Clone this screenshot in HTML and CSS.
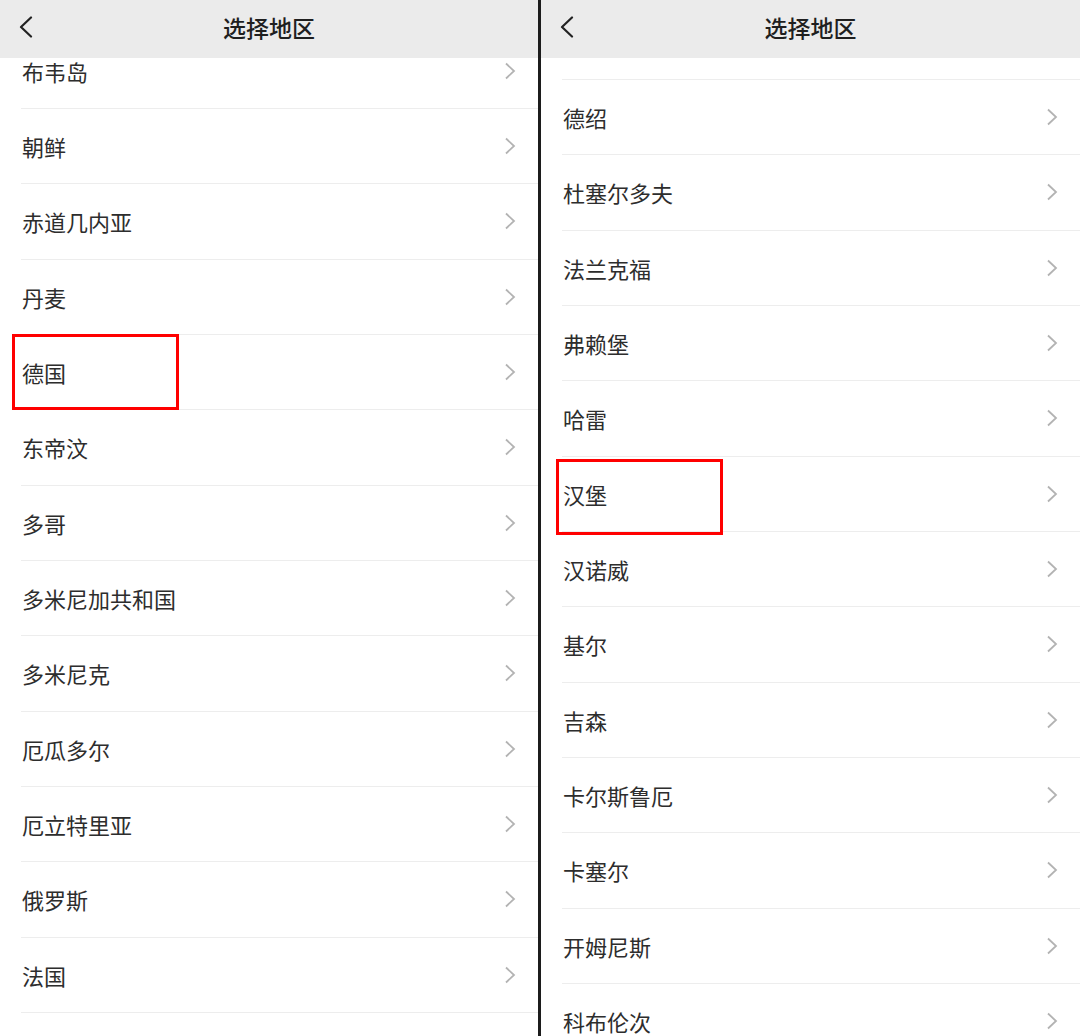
FILE: index.html
```html
<!DOCTYPE html>
<html lang="zh-CN">
<head>
<meta charset="utf-8">
<title>选择地区</title>
<link rel="stylesheet" href="styles.css">
</head>
<body>
<div class="screen">
  <section class="panel panel-left">
    <header class="bar">
      <svg class="back" width="16" height="22" viewBox="0 0 16 22"><path d="M13 1.5 L3 11 L13 20.5" fill="none" stroke="#222" stroke-width="2.2" stroke-linecap="round" stroke-linejoin="round"/></svg>
      <h1 class="title">选择地区</h1>
    </header>
    <div class="list">
      <ul class="rows rows-left">
        <li class="row"><span>布韦岛</span><svg class="chev" width="12" height="18" viewBox="0 0 12 18"><path d="M2 1.5 L10 9 L2 16.5" fill="none" stroke="#b3b3b3" stroke-width="1.8"/></svg></li>
        <li class="row"><span>朝鲜</span><svg class="chev" width="12" height="18" viewBox="0 0 12 18"><path d="M2 1.5 L10 9 L2 16.5" fill="none" stroke="#b3b3b3" stroke-width="1.8"/></svg></li>
        <li class="row"><span>赤道几内亚</span><svg class="chev" width="12" height="18" viewBox="0 0 12 18"><path d="M2 1.5 L10 9 L2 16.5" fill="none" stroke="#b3b3b3" stroke-width="1.8"/></svg></li>
        <li class="row"><span>丹麦</span><svg class="chev" width="12" height="18" viewBox="0 0 12 18"><path d="M2 1.5 L10 9 L2 16.5" fill="none" stroke="#b3b3b3" stroke-width="1.8"/></svg></li>
        <li class="row"><span>德国</span><svg class="chev" width="12" height="18" viewBox="0 0 12 18"><path d="M2 1.5 L10 9 L2 16.5" fill="none" stroke="#b3b3b3" stroke-width="1.8"/></svg><div class="mark mark-left"></div></li>
        <li class="row"><span>东帝汶</span><svg class="chev" width="12" height="18" viewBox="0 0 12 18"><path d="M2 1.5 L10 9 L2 16.5" fill="none" stroke="#b3b3b3" stroke-width="1.8"/></svg></li>
        <li class="row"><span>多哥</span><svg class="chev" width="12" height="18" viewBox="0 0 12 18"><path d="M2 1.5 L10 9 L2 16.5" fill="none" stroke="#b3b3b3" stroke-width="1.8"/></svg></li>
        <li class="row"><span>多米尼加共和国</span><svg class="chev" width="12" height="18" viewBox="0 0 12 18"><path d="M2 1.5 L10 9 L2 16.5" fill="none" stroke="#b3b3b3" stroke-width="1.8"/></svg></li>
        <li class="row"><span>多米尼克</span><svg class="chev" width="12" height="18" viewBox="0 0 12 18"><path d="M2 1.5 L10 9 L2 16.5" fill="none" stroke="#b3b3b3" stroke-width="1.8"/></svg></li>
        <li class="row"><span>厄瓜多尔</span><svg class="chev" width="12" height="18" viewBox="0 0 12 18"><path d="M2 1.5 L10 9 L2 16.5" fill="none" stroke="#b3b3b3" stroke-width="1.8"/></svg></li>
        <li class="row"><span>厄立特里亚</span><svg class="chev" width="12" height="18" viewBox="0 0 12 18"><path d="M2 1.5 L10 9 L2 16.5" fill="none" stroke="#b3b3b3" stroke-width="1.8"/></svg></li>
        <li class="row"><span>俄罗斯</span><svg class="chev" width="12" height="18" viewBox="0 0 12 18"><path d="M2 1.5 L10 9 L2 16.5" fill="none" stroke="#b3b3b3" stroke-width="1.8"/></svg></li>
        <li class="row"><span>法国</span><svg class="chev" width="12" height="18" viewBox="0 0 12 18"><path d="M2 1.5 L10 9 L2 16.5" fill="none" stroke="#b3b3b3" stroke-width="1.8"/></svg></li>
        <li class="row row-empty"></li>
      </ul>
    </div>
  </section>
  <div class="divider"></div>
  <section class="panel panel-right">
    <header class="bar">
      <svg class="back" width="16" height="22" viewBox="0 0 16 22"><path d="M13 1.5 L3 11 L13 20.5" fill="none" stroke="#222" stroke-width="2.2" stroke-linecap="round" stroke-linejoin="round"/></svg>
      <h1 class="title">选择地区</h1>
    </header>
    <div class="list">
      <ul class="rows rows-right">
        <li class="row row-empty"></li>
        <li class="row"><span>德绍</span><svg class="chev" width="12" height="18" viewBox="0 0 12 18"><path d="M2 1.5 L10 9 L2 16.5" fill="none" stroke="#b3b3b3" stroke-width="1.8"/></svg></li>
        <li class="row"><span>杜塞尔多夫</span><svg class="chev" width="12" height="18" viewBox="0 0 12 18"><path d="M2 1.5 L10 9 L2 16.5" fill="none" stroke="#b3b3b3" stroke-width="1.8"/></svg></li>
        <li class="row"><span>法兰克福</span><svg class="chev" width="12" height="18" viewBox="0 0 12 18"><path d="M2 1.5 L10 9 L2 16.5" fill="none" stroke="#b3b3b3" stroke-width="1.8"/></svg></li>
        <li class="row"><span>弗赖堡</span><svg class="chev" width="12" height="18" viewBox="0 0 12 18"><path d="M2 1.5 L10 9 L2 16.5" fill="none" stroke="#b3b3b3" stroke-width="1.8"/></svg></li>
        <li class="row"><span>哈雷</span><svg class="chev" width="12" height="18" viewBox="0 0 12 18"><path d="M2 1.5 L10 9 L2 16.5" fill="none" stroke="#b3b3b3" stroke-width="1.8"/></svg></li>
        <li class="row"><span>汉堡</span><svg class="chev" width="12" height="18" viewBox="0 0 12 18"><path d="M2 1.5 L10 9 L2 16.5" fill="none" stroke="#b3b3b3" stroke-width="1.8"/></svg><div class="mark mark-right"></div></li>
        <li class="row"><span>汉诺威</span><svg class="chev" width="12" height="18" viewBox="0 0 12 18"><path d="M2 1.5 L10 9 L2 16.5" fill="none" stroke="#b3b3b3" stroke-width="1.8"/></svg></li>
        <li class="row"><span>基尔</span><svg class="chev" width="12" height="18" viewBox="0 0 12 18"><path d="M2 1.5 L10 9 L2 16.5" fill="none" stroke="#b3b3b3" stroke-width="1.8"/></svg></li>
        <li class="row"><span>吉森</span><svg class="chev" width="12" height="18" viewBox="0 0 12 18"><path d="M2 1.5 L10 9 L2 16.5" fill="none" stroke="#b3b3b3" stroke-width="1.8"/></svg></li>
        <li class="row"><span>卡尔斯鲁厄</span><svg class="chev" width="12" height="18" viewBox="0 0 12 18"><path d="M2 1.5 L10 9 L2 16.5" fill="none" stroke="#b3b3b3" stroke-width="1.8"/></svg></li>
        <li class="row"><span>卡塞尔</span><svg class="chev" width="12" height="18" viewBox="0 0 12 18"><path d="M2 1.5 L10 9 L2 16.5" fill="none" stroke="#b3b3b3" stroke-width="1.8"/></svg></li>
        <li class="row"><span>开姆尼斯</span><svg class="chev" width="12" height="18" viewBox="0 0 12 18"><path d="M2 1.5 L10 9 L2 16.5" fill="none" stroke="#b3b3b3" stroke-width="1.8"/></svg></li>
        <li class="row"><span>科布伦次</span><svg class="chev" width="12" height="18" viewBox="0 0 12 18"><path d="M2 1.5 L10 9 L2 16.5" fill="none" stroke="#b3b3b3" stroke-width="1.8"/></svg></li>
      </ul>
    </div>
  </section>
</div>
</body>
</html>
```
FILE: styles.css
```css
* { box-sizing: border-box; }
html, body {
  margin: 0;
  padding: 0;
  width: 1080px;
  height: 1036px;
  overflow: hidden;
  background: #ffffff;
  font-family: "Noto Sans CJK SC", "Noto Sans", sans-serif;
}
.screen {
  display: flex;
  width: 1080px;
  height: 1036px;
}
.panel {
  display: flex;
  flex-direction: column;
  height: 1036px;
  background: #ffffff;
  overflow: hidden;
}
.panel-left { width: 538px; }
.panel-right { width: 539px; }
.divider {
  width: 3px;
  height: 1036px;
  background: #1c1c1c;
}
.bar {
  position: relative;
  z-index: 2;
  flex: 0 0 58px;
  height: 58px;
  padding-bottom: 4px;
  background: #ebebeb;
  display: flex;
  align-items: center;
  justify-content: center;
}
.back {
  position: absolute;
  left: 18px;
  top: 16px;
}
.title {
  margin: 0;
  font-size: 23px;
  font-weight: 500;
  color: #1f1f1f;
  line-height: 1;
  letter-spacing: 0;
}
.list {
  flex: 1 1 auto;
  overflow: hidden;
}
.rows {
  list-style: none;
  margin: 0;
  padding: 0;
}
.rows-left { margin-top: -24.33px; }
.rows-right { margin-top: -53.33px; }
.row {
  position: relative;
  height: 75.33px;
  margin-left: 21px;
  padding-left: 1px;
  padding-right: 22px;
  border-bottom: 1px solid #ededed;
  display: flex;
  align-items: center;
  justify-content: space-between;
  font-size: 22px;
  color: #2d2d2d;
  line-height: 1;
}
.chev { flex: 0 0 auto; }
.mark {
  position: absolute;
  width: 167px;
  height: 76px;
  border: 3.5px solid #ff0000;
  pointer-events: none;
}
.mark-left { left: -9px; top: -1px; }
.mark-right { left: -6px; top: 2px; }
```
